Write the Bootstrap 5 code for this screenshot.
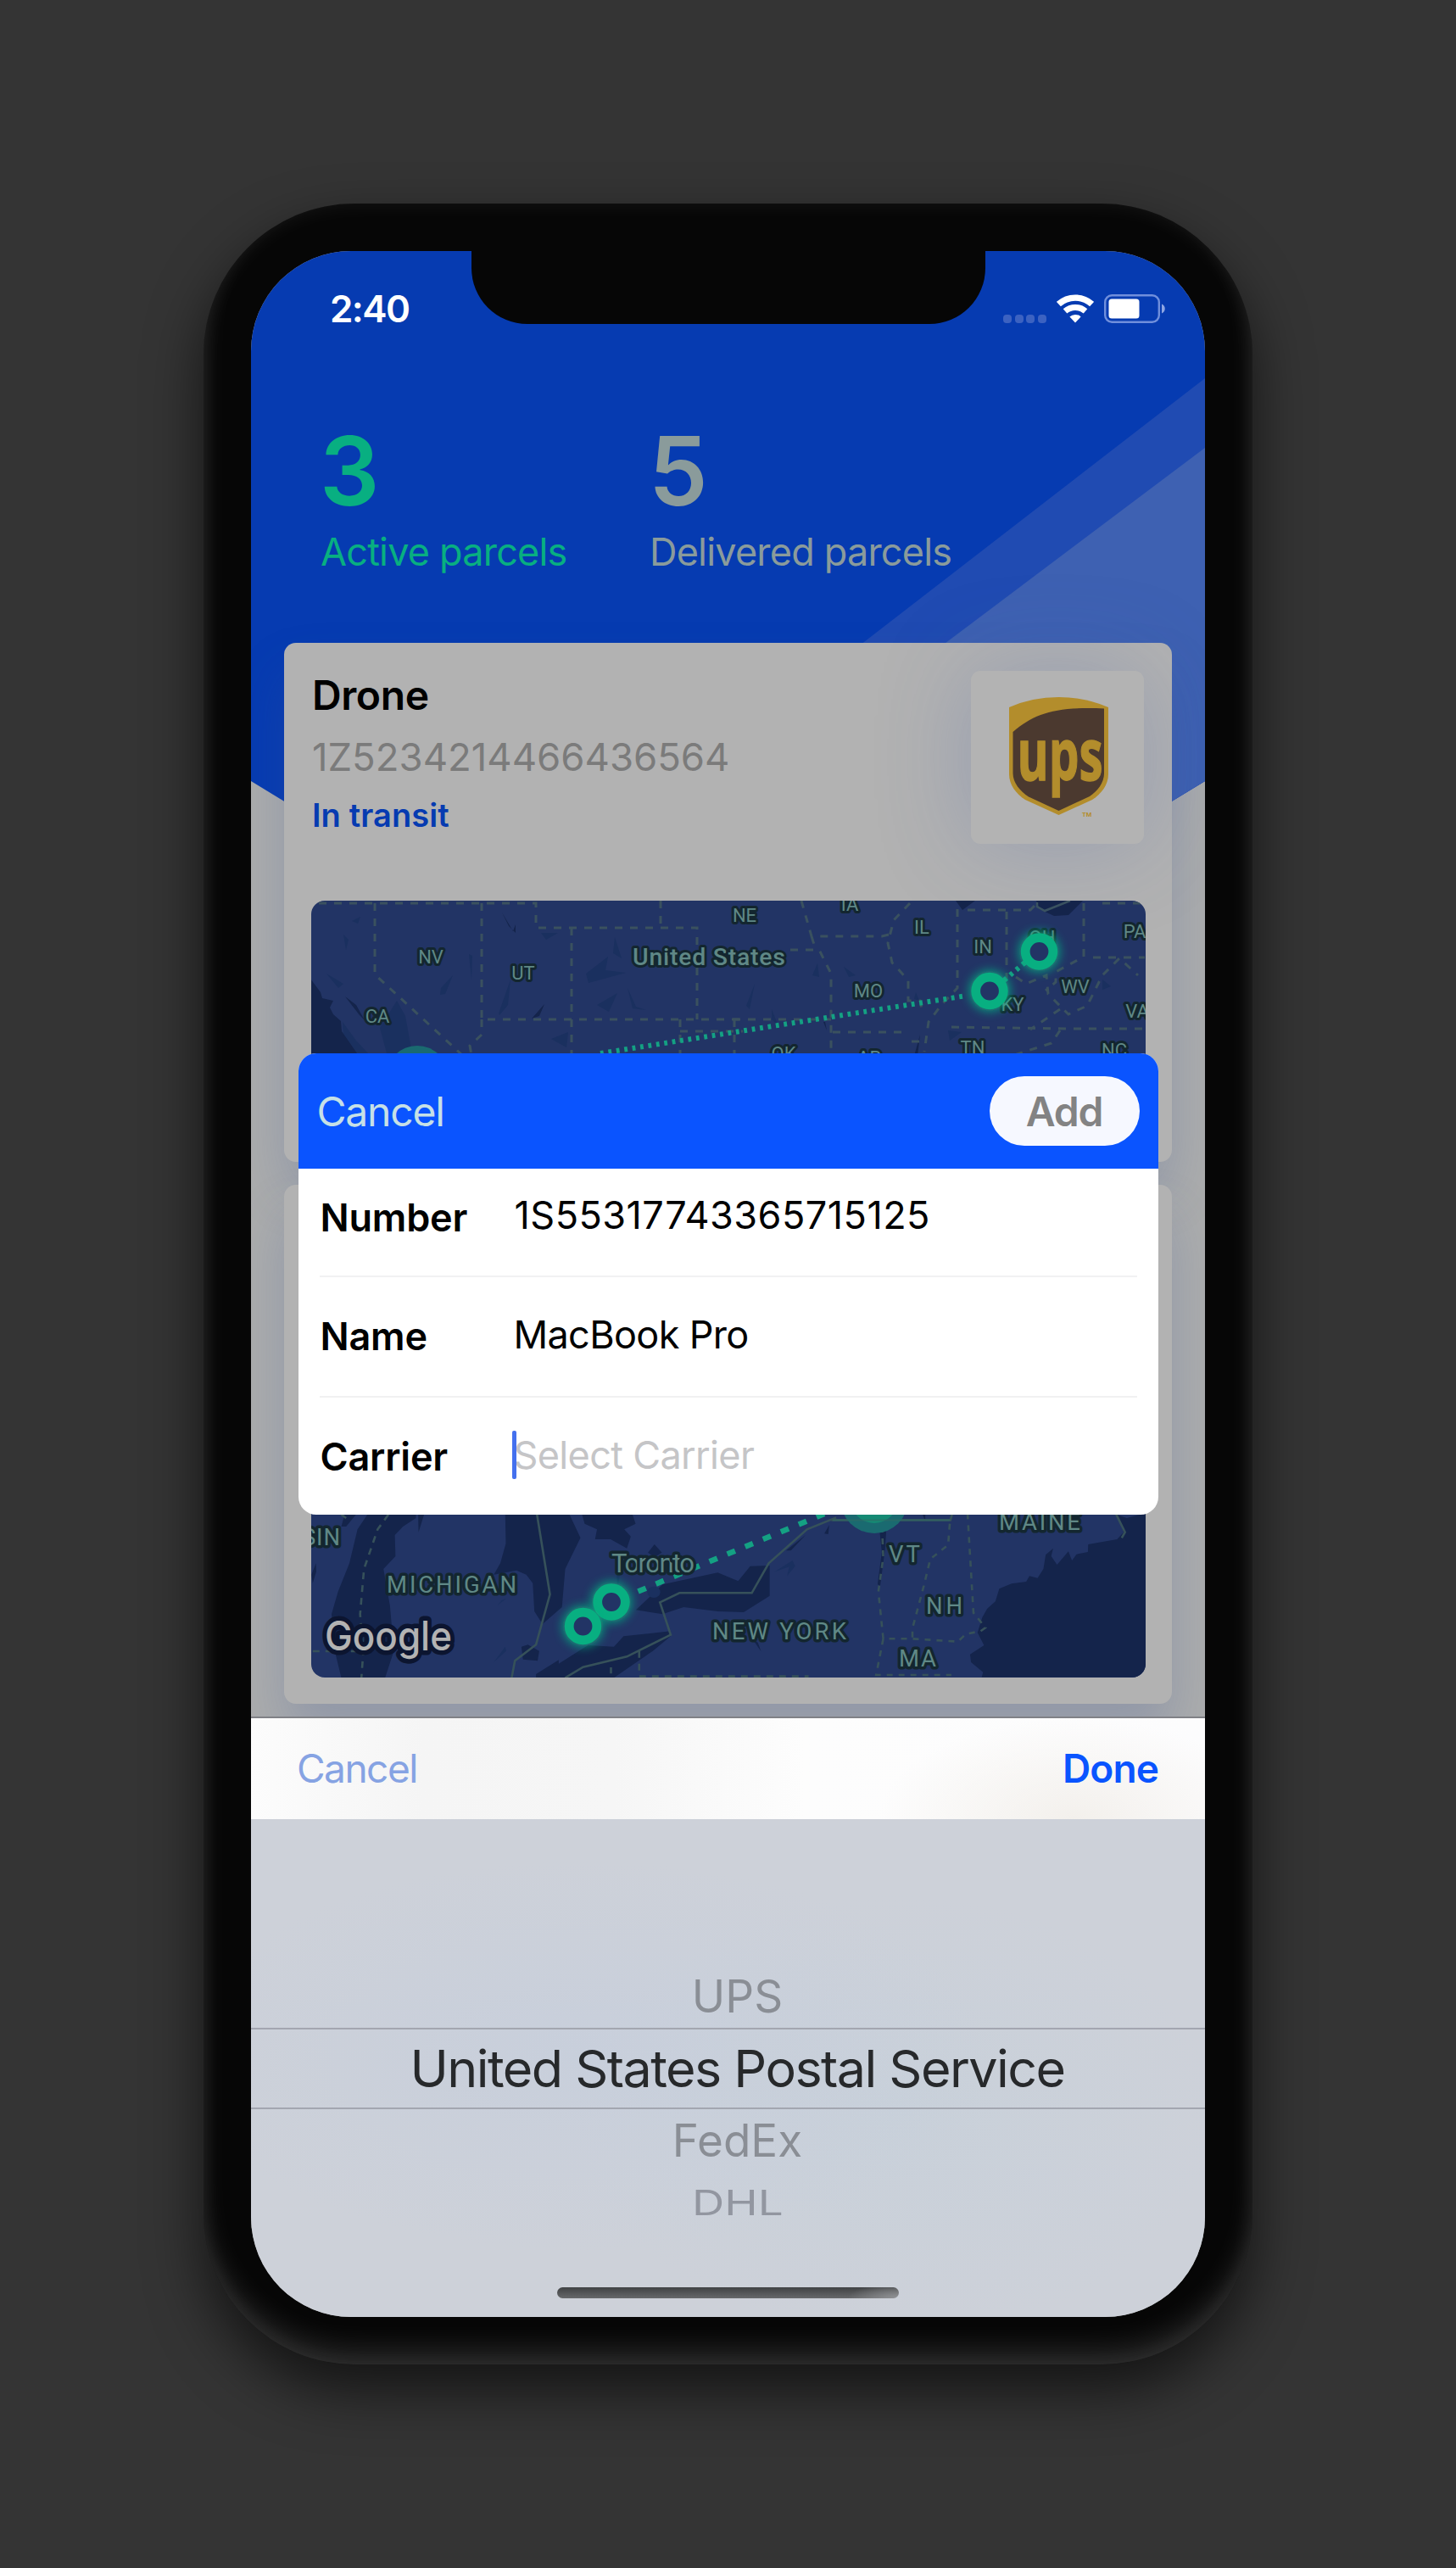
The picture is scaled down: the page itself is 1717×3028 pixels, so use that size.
<!DOCTYPE html>
<html lang="en">
<head>
<meta charset="utf-8">
<meta name="viewport" content="width=device-width, initial-scale=1">
<title>Parcels</title>
<link href="https://cdn.jsdelivr.net/npm/bootstrap@5.3.0/dist/css/bootstrap.min.css" rel="stylesheet">
<style>
body{background:#343434;font-family:Inter,"Liberation Sans",sans-serif;color:#000;min-height:3028px;overflow-x:hidden}
.stage{padding-top:240px;padding-bottom:240px}
.phone{width:1237px;height:2548px;padding:56px;border-radius:178px;background:#060606;
  box-shadow:0 30px 66px 0 rgba(0,0,0,.62),inset 0 -22px 32px -2px rgba(255,255,255,.13),inset 0 0 26px rgba(255,255,255,.07)}
.screen{width:1125px;height:2436px;border-radius:118px;background:#acadad;overflow:hidden}
.backdrop-art{top:0;left:0}
.notch{left:260px;top:0;width:606px;height:86px;background:#060606;border-radius:0 0 66px 66px}
.statusbar{height:132px;padding:3px 46px 0 93px}
.clock{font-size:44px;font-weight:600;color:#fff;line-height:60px;letter-spacing:-1.600px}
.signal{gap:3.600px;margin-right:12px}
.signal i{display:block;width:10px;height:10px;border-radius:4px;background:#3c62c1}
.wifi{margin-right:12px}
.stats{padding:77px 0 77px 82px}
.stat{width:388px}
.stat-num{font-size:113px;font-weight:600;line-height:100px;margin:0 0 16px -1px}
.stat-num span{display:inline-block;transform:scaleX(.98);transform-origin:0 50%}
.stat-label{font-size:45px;line-height:60px;white-space:nowrap;letter-spacing:-.800px}
.c-green{color:#08af81}.c-grey{color:#8a9b9b}
.parcel{height:612px;margin:0 39px 27px;border-radius:14px;background:#b2b2b2;box-shadow:0 36px 60px rgba(60,84,150,.24)}
.parcel-head{height:304px;padding:33px 33px 0 33px}
.p-name{font-size:48px;font-weight:600;line-height:58px;letter-spacing:-.400px}
.p-num{font-size:45.5px;line-height:56px;margin-top:16px;color:#7b7b7b}
.p-state{font-size:38px;font-weight:600;line-height:48px;margin-top:16px;color:#063bb1;letter-spacing:.100px}
.logo-box{width:204px;height:204px;border-radius:11px;background:#b3b3b3;box-shadow:0 0 110px rgba(70,95,170,.26)}
.map{display:block;margin:0 auto;border-radius:16px;overflow:hidden}
.sheet{left:55.500px;top:946px;width:1014px;height:544px;border-radius:21px;background:#fff;overflow:hidden}
.sheet-head{height:136px;background:#0a54ff;padding:0 22px 0 22px}
.sheet-cancel{font-size:48px;color:#c6e0e6;letter-spacing:-1.200px;padding-top:1px}
.pill{width:177px;height:82px;border-radius:41px;background:#f6f8ff;color:#838383;font-size:48px;font-weight:600;line-height:83px;letter-spacing:-1.200px}
.sheet-body{padding:0 25px}
.field{height:141.5px;border-bottom:2.5px solid #f1f1f2}
.field:last-child{border:0}
.f-label{width:229px;font-size:45px;font-weight:600;line-height:56px;letter-spacing:-.200px;padding-left:1px}
.f-value{font-size:45px;line-height:52px;margin-top:-3px;letter-spacing:-.650px}
.f-serial{letter-spacing:.480px;padding-left:1px;margin-top:-6px}
.f-hint{color:#c5c5c7;margin-top:-4px}
.f-1{height:128px;padding-bottom:10px}
.f-2,.f-3{padding-bottom:0}
.caret{left:-2px;top:-3px;width:5.5px;height:57px;border-radius:2px;background:#4470ee}
.keyboard{left:0;top:1728px;width:1125px;height:708px;
 background:radial-gradient(ellipse 480px 230px at 390px 400px,rgba(195,205,222,.5),transparent),radial-gradient(ellipse 380px 260px at 760px 470px,rgba(195,208,219,.45),transparent),#cdd1d9}
.kb-bar{height:121px;border-top:2px solid #808186;padding:0 55px 1px 54px;
 background:radial-gradient(ellipse 230px 120px at 970px 120px,#f3f0ec,transparent),linear-gradient(90deg,#fcfcfc,#f5f5f5 18%,#f6f6f6 38%,#fdfdfd 58%,#fcfcfd)}
.kb-cancel{font-size:46px;color:#86a3e3;letter-spacing:-1.500px}
.kb-done{font-size:46px;font-weight:600;color:#0a54ff;letter-spacing:-.900px}
.wheel{padding-top:174px}
.wheel>div{padding-left:22px;text-align:center;white-space:nowrap}
.w-far{font-size:53px;line-height:72px;color:#8a8e95}
.w-far:first-child{position:relative;top:-1.500px}
.w-sel{font-size:61px;line-height:92px;color:#27292b;border-top:2px solid #a3a6b0;border-bottom:2px solid #a3a6b0;letter-spacing:-1.550px}
.w-sel+.w-far{line-height:75px}
.w-last{font-size:51px;line-height:60px;color:#9296a0;transform:scale(1.04,.81);margin-top:5px}
.homebar{left:361px;bottom:22px;width:403px;height:13px;border-radius:7px;background:radial-gradient(ellipse 60px 18px at 100% 100%,#929497,transparent),linear-gradient(#404244,#66686a)}
</style>
</head>
<body>
<div class="stage">
<main class="phone mx-auto">
<div class="screen position-relative">
  <svg class="backdrop-art position-absolute" width="1125" height="760" viewBox="0 0 1125 760" aria-hidden="true">
    <path fill="#063bb1" d="M0 0H1125V625L562 968L0 625Z"/>
    <path fill="#204bb2" d="M1125 150V625L560 968V587Z"/>
    <path fill="#3e61b2" d="M1125 232V625L560 968V657Z"/>
  </svg>
  <div class="notch position-absolute"></div>

  <div class="position-relative">
    <div class="statusbar d-flex align-items-center justify-content-between">
      <span class="clock">2:40</span>
      <span class="d-flex align-items-center">
        <span class="signal d-flex align-self-end"><i></i><i></i><i></i><i></i></span>
        <svg class="wifi" width="44" height="34" viewBox="0 0 44 34" fill="none" stroke="#fff"><path stroke-width="7.4" d="M2.4 11.6A29.3 29.3 0 0 1 41.6 11.6"/><path stroke-width="7" d="M10 19.9A18.3 18.3 0 0 1 34 19.9"/><path fill="#fff" stroke="none" d="M22 33.5L15.4 26.5A9.7 9.7 0 0 1 28.6 26.5Z"/></svg>
        <svg width="73" height="34" viewBox="0 0 73 34"><rect x="1.2" y="1.2" width="63.6" height="31.6" rx="8" fill="none" stroke="#708fdc" stroke-width="2.4"/><rect x="5.5" y="5.5" width="36" height="23" rx="3.5" fill="#fff"/><path fill="#8ea6e3" d="M68 11.5C73 13.500 73 20.500 68 22.500Z"/></svg>
      </span>
    </div>
    <div class="stats d-flex">
      <div class="stat c-green"><div class="stat-num"><span>3</span></div><div class="stat-label">Active parcels</div></div>
      <div class="stat c-grey"><div class="stat-num"><span>5</span></div><div class="stat-label">Delivered parcels</div></div>
    </div>

    <article class="parcel">
      <div class="parcel-head d-flex justify-content-between">
        <div>
          <div class="p-name">Drone</div>
          <div class="p-num">1Z5234214466436564</div>
          <div class="p-state">In transit</div>
        </div>
        <div class="logo-box">
          <svg width="204" height="204" viewBox="1145 791 204 204">
            <path fill="#b38d2c" d="M1190 834Q1217 822 1248.500 822Q1280 822 1307 834V913C1307 925 1299 936 1288 943L1248.500 961L1209 943C1198 936 1190 925 1190 913Z"/>
            <path fill="#4b392f" d="M1194.500 863C1220 841 1245 833 1302 835.500V912C1302 923 1294 933 1285 939L1248.500 956L1213 939.500C1203 933 1194.500 923 1194.500 912Z"/>
            <text x="1199.500" y="920" font-family="Open Sans" font-weight="700" font-size="85" fill="#b38d2c" stroke="#b38d2c" stroke-width="1.400" textLength="101" lengthAdjust="spacingAndGlyphs">ups</text>
            <text x="1276" y="963" font-family="Roboto" font-weight="700" font-size="7.500" fill="#b38d2c">TM</text>
          </svg>
        </div>
      </div>
      <svg class="map" width="984" height="277" viewBox="367 1062 984 277">
        <defs>
          <filter id="glow" x="-60%" y="-60%" width="220%" height="220%"><feGaussianBlur stdDeviation="6"/></filter>
          <g id="node"><circle r="24" fill="#08af81" opacity=".85" filter="url(#glow)"/><circle r="16.300" fill="#223465" stroke="#08af81" stroke-width="10.800"/></g>
        </defs>
        <rect x="366" y="1062" width="985" height="277" fill="#223465"/>
        <g fill="#1a305f">
          <path d="M408 1120l3-12-6-6zM385 1148l20 12-6 5zM415 1086l10-5-3 8zM520 1165l14-15-9 22-6 1zM553 1125l4 2-1 28zM588 1195l14-40-3 30-10 12zM691 1148l26-20-3 16 24 3-44 12zM704 1185l24-14-10 22zM468 1180l10 18 8 44h-30l-8-30zM404 1205l16 22 14 15h-28zM638 1100l20 0-14 8zM650 1225l20-8-2 18zM725 1105l8 25-10-6zM740 1165l10 22 12 4-16-2zM958 1150l6-14 2 16zM995 1140l14 10-8 2zM880 1186l10-26-6 30zM910 1190l8 20-8-8zM1300 1155l10 8-10 4zM1080 1170l4 10-6-2zM1118 1215l16 2-14 10z"/>
        </g>
        <g fill="#14244b">
          <path d="M366 1154L378 1170L380 1177L393 1180L389 1188L393 1196L402 1204L403 1216L421 1242H366ZM592 1076L605 1098L608 1090V1100L600 1092ZM642 1184L627 1201L636 1198ZM407 1175L420 1185L430 1203L424 1197ZM1127 1062L1135 1073L1150 1062ZM1222 1062L1226 1072L1243 1080L1260 1079L1277 1062ZM1085 1220L1078 1245L1082 1245ZM973 1205l2 10-4-10z"/>
        </g>
        <path d="M1223 1064V1069L1232 1074L1262 1062" fill="none" stroke="#3a5260" stroke-width="2.500"/>
        <g fill="none" stroke="#3a515f" stroke-width="3" stroke-dasharray="9 9">
          <path d="M376 1065H632V1094H822V1202M442 1065V1149L545 1244M568 1065V1202H880M568 1202V1220L554 1233L556 1244M674 1094V1244M779 1062V1094M802 1202V1244M802 1216H876"/>
          <path d="M945 1062L957 1104H1040L1048 1102M957 1104L962 1120M932 1120H966L980 1148V1244M864 1202H980M866 1202V1244M982 1217H1065M1073 1065L1054 1085L1047 1112L1052 1135L1063 1147L1071 1156L1071 1180L1085 1180L1088 1196M1129 1072V1165L1110 1185L1095 1205L1090 1240M1075 1228H1090M1141 1073H1215L1222 1066M1187 1075V1165M1278 1065V1128L1245 1146L1245 1158L1233 1168M1289 1129H1350M1300 1065H1350M1198 1152L1210 1160L1234 1150L1236 1172L1260 1196L1282 1186L1300 1150L1320 1130L1342 1150M1250 1190L1215 1214M1122 1211L1260 1213H1350M1250 1215L1240 1230L1196 1244"/>
        </g>
        <g fill="#5f8886" font-family="Roboto" font-size="22" text-anchor="middle" stroke="#13262f" stroke-width="6" stroke-linejoin="round" paint-order="stroke">
          <text x="878" y="1087">NE</text><text x="1002" y="1073.500">IA</text><text x="1087" y="1101">IL</text><text x="1159" y="1124">IN</text><text x="1229" y="1113">OH</text><text x="1338" y="1106">PA</text>
          <text x="508" y="1135.500">NV</text><text x="617" y="1154.500">UT</text><text x="445" y="1205.500">CA</text><text x="1024" y="1175.500">MO</text><text x="1268" y="1171">WV</text><text x="1194" y="1192">KY</text><text x="1341" y="1200">VA</text>
          <text x="924" y="1250">OK</text><text x="1025" y="1255">AR</text><text x="1147" y="1243">TN</text><text x="1314" y="1246">NC</text>
          <text x="836" y="1138" font-size="28.500" font-weight="500" textLength="180">United States</text>
        </g>
        <circle cx="492" cy="1270" r="37" fill="#1a6a70"/>
        <path d="M708 1242L860 1218L1140 1174" fill="none" stroke="#14a183" stroke-width="6" stroke-dasharray="3.800 5.720"/>
        <path d="M1184 1156L1212 1132" fill="none" stroke="#14a183" stroke-width="6" stroke-dasharray="4 5.500"/>
        <use href="#node" x="1167" y="1168.500"/><use href="#node" x="1225.500" y="1122"/>
      </svg>
    </article>

    <article class="parcel">
      <div class="parcel-head"></div>
      <svg class="map" width="984" height="277" viewBox="367 1701 984 277">
        <rect x="366" y="1700" width="985" height="279" fill="#223465"/>
        <g transform="translate(280 1760) scale(.3827 .3333)" fill="#14244b">
          <path d="M405 70L370 130L345 250L310 350L290 430L300 560L320 655H455L482 560L470 400L450 270L487 225L485 150L510 120L550 90V70ZM825 70L827 180L810 250L790 290L860 275L890 290L910 320L915 420L940 465L1000 405L1010 270L1057 160L1020 70ZM1060 70L1070 110L1108 130L1102 165L1150 165L1200 197L1212 155L1192 130L1227 110L1215 70ZM920 642L990 592V605L1080 540L1160 545L1190 508L1335 490V508L1280 560L1160 655H920ZM1228 415L1260 380L1310 325L1480 283L1543 313L1580 260L1640 258V365L1560 423L1480 420L1375 405L1310 430ZM1285 183L1308 212L1285 228L1265 212ZM875 545L895 538L930 560L925 595L880 590ZM365 78L335 120L320 120L330 78ZM557 78L575 78L558 140ZM242 250L243 280L232 320L228 290Z"/>
          <circle cx="1283" cy="352" r="20" fill="#1a305f"/><path fill="#1a305f" d="M825 545L828 560L790 600ZM828 375L800 400L815 380ZM1168 290L1178 290L1172 340Z"/>
        </g>
        <g transform="translate(860 1760) scale(.3827 .3333)" fill="#14244b">
          <path d="M1290 70V653H778L782 635L745 600L742 572L785 540L765 495L780 440L795 410L820 385L832 340L870 322L915 315L925 295L950 302L968 270L975 220L998 197L992 225L1010 255L1045 208L1056 240L1070 218L1105 210L1106 183L1195 165L1215 140L1195 78L1225 90ZM458 78L487 78L480 200L465 330L457 325L470 210ZM293 145L308 115L305 147ZM175 205L235 150L190 205ZM70 515L98 562L88 530ZM596 78H604V102Z"/>
          <path fill="#1a305f" d="M140 280L195 240L203 260L178 295L185 262Z"/>
        </g>
        <g transform="translate(280 1760) scale(.3827 .3333)" fill="none" stroke="#36515a" stroke-width="2.600">
          <path vector-effect="non-scaling-stroke" d="M922 70L963 360L920 538L855 595L845 655M1010 655L1065 617L1200 580L1335 503L1302 388L1362 355H1585L1637 250L1755 130L1845 88"/>
          <path vector-effect="non-scaling-stroke" d="M1830 97H2197L2202 78M2705 70L2735 140L2725 160"/>
          <path vector-effect="non-scaling-stroke" stroke-dasharray="8 7" d="M465 78L432 130L390 270L378 430L388 560L382 655M232 561H390M1151 618V640M1238 560V650H1760M320 78L335 90"/>
          <path vector-effect="non-scaling-stroke" stroke-dasharray="7 7" d="M1985 78L1990 230L1975 350L1990 517L2080 517L2220 527L2245 500L2290 490L2305 478L2268 425L2250 78M2195 110L2190 185L2135 235L2115 330L2080 480V515M1990 517L1968 645H2200"/>
        </g>
        <path d="M752.500 1876.500L860 1831.500L972 1785" fill="none" stroke="#14a183" stroke-width="6.500" stroke-dasharray="10 12.800"/>
        <circle cx="1031" cy="1768" r="40" fill="#1a6a70"/><circle cx="1031" cy="1768" r="28" fill="#158a74"/>
        <path d="M982 1792.500H1120" stroke="#2f6b66" stroke-width="2" opacity=".6"/>
        <g fill="#5f8886" font-family="Roboto" font-size="27.500" stroke="#13262f" stroke-width="7" stroke-linejoin="round" paint-order="stroke">
          <text x="356" y="1822" textLength="45">SIN</text><text x="456" y="1877.500" textLength="153">MICHIGAN</text><text x="721" y="1853.500" font-size="31" textLength="98">Toronto</text>
          <text x="840" y="1933" textLength="158">NEW YORK</text><text x="1048" y="1841.500" textLength="37">VT</text><text x="1092" y="1903" textLength="43">NH</text><text x="1060" y="1964.500" textLength="44">MA</text><text x="1178" y="1803.500" textLength="96">MAINE</text>
        </g>
        <text x="383" y="1945.500" font-family="Inter" font-weight="500" font-size="48" textLength="150" lengthAdjust="spacingAndGlyphs" fill="#b3b3b3" stroke="#0c1530" stroke-width="11" stroke-linejoin="round" paint-order="stroke">Google</text>
        <use href="#node" x="721" y="1889"/><use href="#node" x="687.500" y="1917.500"/>
      </svg>
    </article>
  </div>

  <section class="sheet position-absolute">
    <div class="sheet-head d-flex align-items-center justify-content-between">
      <span class="sheet-cancel">Cancel</span>
      <span class="pill text-center">Add</span>
    </div>
    <div class="sheet-body">
      <div class="field f-1 d-flex align-items-center"><div class="f-label">Number</div><div class="f-value f-serial">1S55317743365715125</div></div>
      <div class="field f-2 d-flex align-items-center"><div class="f-label">Name</div><div class="f-value">MacBook Pro</div></div>
      <div class="field f-3 d-flex align-items-center"><div class="f-label">Carrier</div><div class="f-value f-hint position-relative">Select Carrier<div class="caret position-absolute"></div></div></div>
    </div>
  </section>

  <section class="keyboard position-absolute">
    <div class="kb-bar d-flex align-items-center justify-content-between"><span class="kb-cancel">Cancel</span><span class="kb-done">Done</span></div>
    <div class="wheel">
      <div class="w-far">UPS</div>
      <div class="w-sel">United States Postal Service</div>
      <div class="w-far">FedEx</div>
      <div class="w-last">DHL</div>
    </div>
    <div class="homebar position-absolute"></div>
  </section>
</div>
</main>
</div>
<script src="https://cdn.jsdelivr.net/npm/bootstrap@5.3.0/dist/js/bootstrap.bundle.min.js"></script>
</body>
</html>
